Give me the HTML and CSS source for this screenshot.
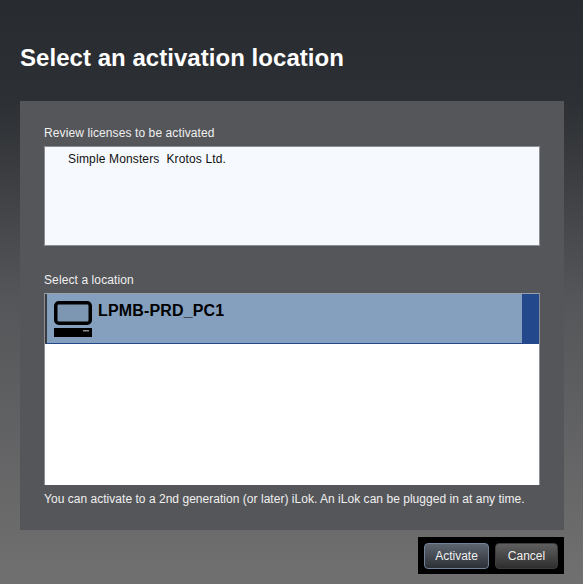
FILE: index.html
```html
<!DOCTYPE html>
<html>
<head>
  <title>Select an activation location</title>
  <link rel="stylesheet" href="styles.css">
</head>
<body>
  <h1>Select an activation location</h1>

  <div class="panel">
    <div class="label">Review licenses to be activated</div>
    <div class="license-box">
      <div class="license-row">Simple Monsters&nbsp; Krotos Ltd.</div>
    </div>

    <div class="label location-label">Select a location</div>
    <div class="location-box">
      <div class="location-row">
        <svg class="computer-icon" width="38" height="36" viewBox="0 0 38 36">
          <rect x="1.75" y="1.75" width="34.5" height="20.5" rx="3" fill="#7d96b2" stroke="#000" stroke-width="3.5"/>
          <path d="M0 27h38v9H0z" fill="#000"/>
          <rect x="29" y="29" width="6" height="1.5" fill="#8a8f96"/>
        </svg>
        <div class="location-name">LPMB-PRD_PC1</div>
        <div class="location-end"></div>
      </div>
    </div>

    <div class="note">You can activate to a 2nd generation (or later) iLok. An iLok can be plugged in at any time.</div>
  </div>

  <div class="footer">
    <div class="buttons">
      <button class="primary">Activate</button>
      <button>Cancel</button>
    </div>
  </div>
</body>
</html>
```

FILE: styles.css
```css
html {
  height: 100%;
}
body {
  margin: 0;
  height: 584px;
  overflow: hidden;
  padding: 0 19px 0 20px;
  box-sizing: border-box;
  font-family: "Liberation Sans", Arial, sans-serif;
  background: linear-gradient(#282b2f 0, #2c2f33 100px, #555659 300px, #707070 100%);
  color: #fff;
}
h1 {
  margin: 0;
  padding-top: 44px;
  height: 57px;
  font-size: 24px;
  line-height: 28px;
  font-weight: bold;
  letter-spacing: 0.04px;
  color: #fff;
}
.panel {
  height: 429px;
  box-sizing: border-box;
  padding: 24px 24px 0;
  background-color: #55565a;
}
.label {
  font-size: 12px;
  line-height: 16px;
  letter-spacing: 0.1px;
  color: #f0f0f0;
}
.license-box {
  margin-top: 5px;
  height: 100px;
  box-sizing: border-box;
  padding: 5px 23px;
  background-color: #f6faff;
  border: 1px solid #8b8e94;
  font-size: 12px;
  line-height: 15px;
  letter-spacing: 0.14px;
  color: #111;
}
.location-label {
  margin-top: 26px;
}
.location-box {
  margin-top: 5px;
  height: 192px;
  box-sizing: border-box;
  background-color: #fff;
  border-top: 1px solid #9aa0a8;
  border-right: 1px solid #8b8e94;
  border-left: 1px solid #8b8e94;
}
.location-row {
  display: flex;
  height: 50px;
  box-sizing: border-box;
  background-color: #84a0be;
  border-bottom: 1px solid #24488c;
  border-left: 2px solid #3a3c40;
}
.computer-icon {
  margin: 7px 0 0 7px;
}
.location-name {
  flex: 1;
  margin: 7px 0 0 6px;
  font-size: 16px;
  line-height: 20px;
  font-weight: bold;
  letter-spacing: 0.16px;
  color: #000;
}
.location-end {
  width: 17px;
  background-color: #24488c;
}
.note {
  margin-top: 6px;
  font-size: 12px;
  line-height: 16px;
  letter-spacing: 0.03px;
  color: #f0f0f0;
}
.footer {
  display: flex;
  justify-content: flex-end;
  margin-top: 7px;
}
.buttons {
  display: flex;
  gap: 6px;
  padding: 6px 6px 5px;
  background-color: #000;
}
button {
  width: 63px;
  height: 26px;
  padding: 0;
  font-family: inherit;
  font-size: 12px;
  color: #f0f0f0;
  background: linear-gradient(#605f5f, #2e2e2e);
  border: 1px solid #3c3c3c;
  border-radius: 4px;
}
button.primary {
  width: 65px;
  border: 1px solid #6f8298;
  background: linear-gradient(#5d6570, #2d3036);
}
```
